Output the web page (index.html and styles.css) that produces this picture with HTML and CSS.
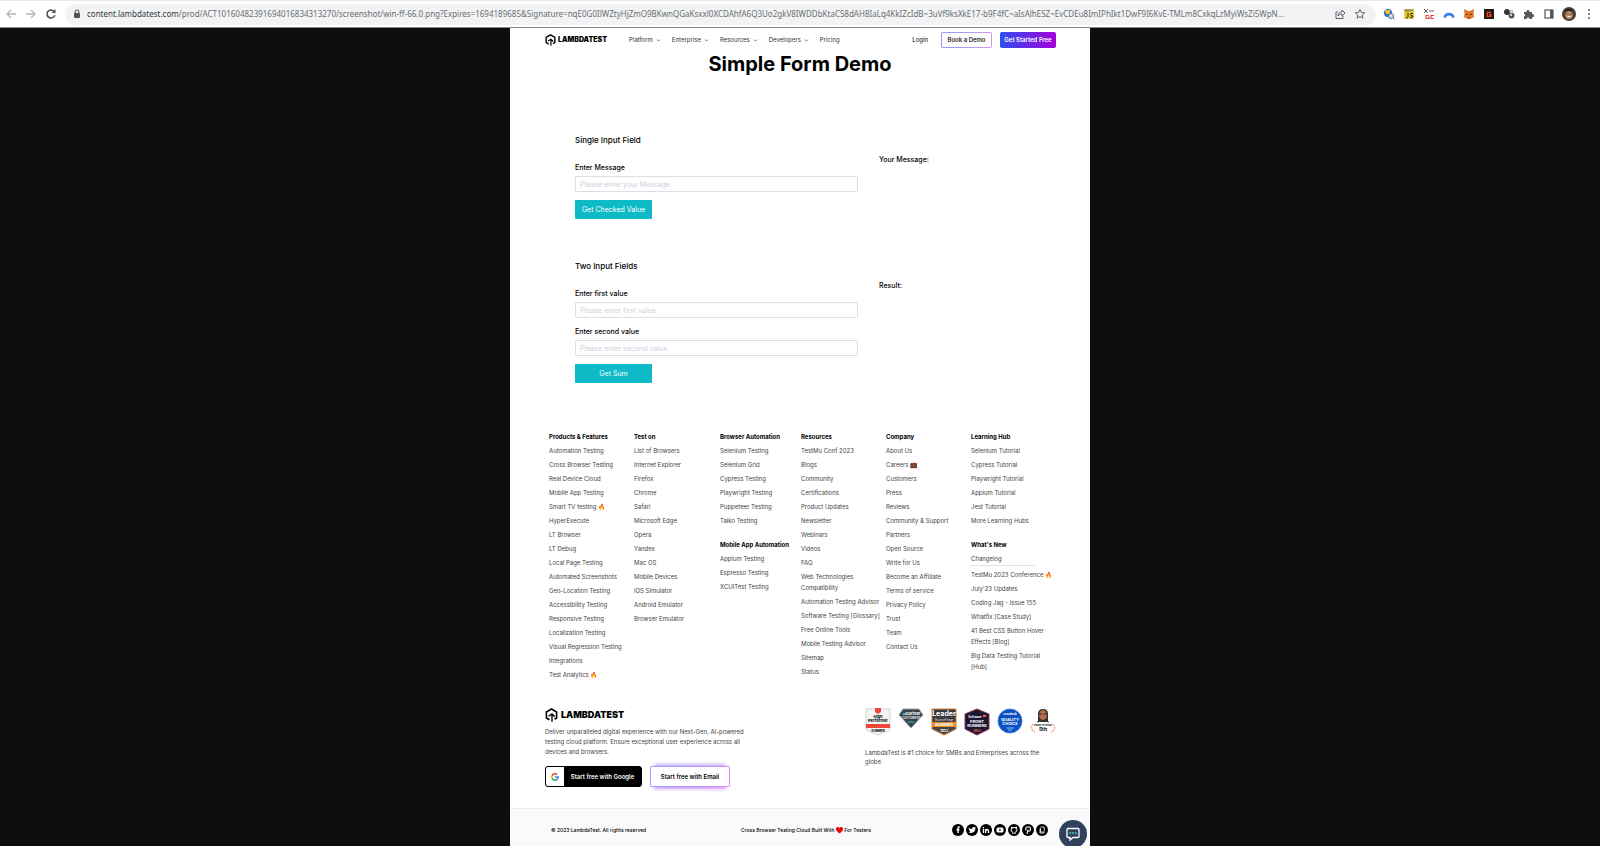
FILE: index.html
```html
<!DOCTYPE html>
<html lang="en">
<head>
    <meta charset="UTF-8">
    <meta name="viewport" content="width=device-width, initial-scale=1.0">
    <title>Simple Form Demo</title>
    <link rel="stylesheet" href="styles.css">
</head>
<body>

<!-- shared icons -->
<svg class="defs" width="0" height="0" aria-hidden="true">
    <symbol id="logo" viewBox="0 0 24 28">
        <path d="M8 23.500 1.800 20V8L12 2l10.200 6v12l-4 2.500" fill="none" stroke="#000" stroke-width="3.200"/>
        <path d="M6 16.500 13 12l5.500 5.500M13 12v15.500" fill="none" stroke="#000" stroke-width="2.800"/>
    </symbol>
    <symbol id="chevron" viewBox="0 0 8 8">
        <path d="M1.500 2.500 4 5l2.500-2.500" fill="none" stroke="#555" stroke-width="1.200"/>
    </symbol>
</svg>

<div class="toolbar">
    <button class="tool" aria-label="Back"><svg viewBox="0 0 12 12"><path d="M11 6H2M6 2 2 6l4 4" fill="none" stroke="#b5b7ba" stroke-width="1.300"/></svg></button>
    <button class="tool" aria-label="Forward"><svg viewBox="0 0 12 12"><path d="M1 6h9M6 2l4 4-4 4" fill="none" stroke="#b5b7ba" stroke-width="1.300"/></svg></button>
    <button class="tool" aria-label="Reload"><svg viewBox="0 0 12 12"><path d="M9.800 7.200A4 4 0 1 1 9 3.300" fill="none" stroke="#4c4f53" stroke-width="1.500"/><path d="M10.500 1v4h-4z" fill="#4c4f53"/></svg></button>
    <div class="address">
        <svg class="lock" viewBox="0 0 8 10"><path d="M2.200 4V2.800a1.800 1.800 0 0 1 3.600 0V4" fill="none" stroke="#505357" stroke-width="1.100"/><rect x="1" y="4" width="6" height="5" rx="1" fill="#505357"/></svg>
        <span class="url"><b>content.lambdatest.com</b>/prod/ACT10160482391694016834313270/screenshot/win-ff-66.0.png?Expires=1694189685&amp;Signature=nqE0G0IlWZtyHjZmO9BKwnQGaKsxxl0XCDAhfA6Q3Uo2gkV8IWDDbKtaCS8dAH8IaLq4KkIZcIdB~3uVf9ksXkE17-b9F4fC~aIsAlhESZ~EvCDEu8ImIPhIkt1DwF9I6KvE-TMLm8CxkqLzMyiWsZi5WpN...</span>
        <button class="tool share" aria-label="Share"><svg viewBox="0 0 12 12"><path d="M4 4H2v6.500h7V8M4 8c0-3 2-4 4-4V2l3 3-3 3V6C6.500 6 5 6.500 4 8z" fill="none" stroke="#5f6368"/></svg></button>
        <button class="tool" aria-label="Bookmark"><svg viewBox="0 0 12 12"><path d="m6 1.500 1.400 3 3.200.3-2.400 2.200.7 3.200L6 8.500l-2.900 1.700.7-3.200-2.400-2.200 3.200-.3z" fill="none" stroke="#5f6368"/></svg></button>
    </div>
    <div class="extensions">
        <svg viewBox="0 0 12 12"><circle cx="5" cy="5" r="4" fill="#2d6fd0"/><path d="M2 2h5v4H3z" fill="#f2bd2e"/><circle cx="8" cy="8" r="2.500" fill="#d9e2e8" stroke="#4b6b85"/><path d="m10 10 1.500 1.500" stroke="#4b6b85"/></svg>
        <svg viewBox="0 0 12 12"><rect x="1" y="1" width="10" height="10" fill="#e9cc32"/><path d="M2 3h5M2 2h8" stroke="#777" /><path d="M5 5v4q0 1-2 1M10 5.500q-2.500-1-2.500.7T10 8q0 2-3 1.200" fill="none" stroke="#222"/></svg>
        <svg viewBox="0 0 12 12"><path d="m1 1 4 4m0-4L1 5m5-2h5" stroke="#666" fill="none"/><path d="M6 7.500H3v3h3V9H5m6-1.500H8v3h3" stroke="#e34a43" fill="none" stroke-width="1.200"/></svg>
        <svg viewBox="0 0 12 12"><path d="M1.500 9.500a4.700 4.700 0 0 1 9 0" fill="none" stroke="#3b7ef0" stroke-width="2.600"/></svg>
        <svg viewBox="0 0 12 12"><path d="m1 1 4 2h2l4-2-.5 4.500L11 9l-2.500 1.500L6 11l-2.500-.5L1 9l.5-3.500z" fill="#e17726"/><path d="m3 6 2 .7M9 6l-2 .7M5 10h2" stroke="#59361d"/></svg>
        <svg viewBox="0 0 12 12"><rect x="1" y="1" width="10" height="10" fill="#231815"/><path d="M8 4.300H4.200v4h3.600V6.500H6" fill="none" stroke="#ee4928" stroke-width="1.300"/></svg>
        <svg viewBox="0 0 12 12"><circle cx="4" cy="4" r="3" fill="#333"/><circle cx="8.500" cy="7.500" r="3" fill="#555"/><circle cx="8.500" cy="3.500" r="2" fill="#ccc"/><circle cx="8" cy="7" r="1" fill="#eee"/></svg>
        <svg viewBox="0 0 12 12"><path d="M1 4h2.700a1.400 1.400 0 1 1 2.600 0H9v2.200a1.500 1.500 0 1 1 0 2.800v2H6.500a1.400 1.400 0 0 0-2.800 0H1V8.500a1.400 1.400 0 0 0 0-2.700z" fill="#54575b"/></svg>
        <svg viewBox="0 0 12 12"><rect x="2" y="2" width="8" height="8" fill="none" stroke="#54575b" stroke-width="1.200"/><path d="M7 2h3v8H7z" fill="#54575b"/></svg>
        <svg class="avatar" viewBox="0 0 14 14"><circle cx="7" cy="7" r="7" fill="#4a4038"/><ellipse cx="7" cy="7.500" rx="3.800" ry="4.500" fill="#c58b6b"/><path d="M3 6q0-4 4-4t4 4q-1-2-4-2T3 6" fill="#201a18"/><path d="M4 7h2.500M7.500 7H10" stroke="#332622" stroke-width=".6"/><path d="M5.500 9.500h3" stroke="#fff"/></svg>
        <svg viewBox="0 0 12 12"><g fill="#54575b"><circle cx="6" cy="2" r="1"/><circle cx="6" cy="6" r="1"/><circle cx="6" cy="10" r="1"/></g></svg>
    </div>
</div>

<div class="page">
    <header class="header">
        <a class="logo" href="#"><svg><use href="#logo"/></svg>LAMBDATEST</a>
        <nav class="nav">
            <a href="#">Platform <svg><use href="#chevron"/></svg></a>
            <a href="#">Enterprise <svg><use href="#chevron"/></svg></a>
            <a href="#">Resources <svg><use href="#chevron"/></svg></a>
            <a href="#">Developers <svg><use href="#chevron"/></svg></a>
            <a href="#">Pricing</a>
        </nav>
        <div class="account">
            <a href="#">Login</a>
            <button class="demo-btn">Book a Demo</button>
            <button class="start-btn">Get Started Free</button>
        </div>
    </header>

    <h1>Simple Form Demo</h1>

    <main>
        <section class="panel">
            <h2>Single Input Field</h2>
            <div class="panel-body">
                <form>
                    <label for="message">Enter Message</label>
                    <input type="text" id="message" placeholder="Please enter your Message">
                    <button type="button" class="submit-btn">Get Checked Value</button>
                </form>
                <div class="result">Your Message:</div>
            </div>
        </section>
        <section class="panel">
            <h2>Two Input Fields</h2>
            <div class="panel-body">
                <form>
                    <label for="sum1">Enter first value</label>
                    <input type="text" id="sum1" placeholder="Please enter first value">
                    <label for="sum2">Enter second value</label>
                    <input type="text" id="sum2" placeholder="Please enter second value">
                    <button type="button" class="submit-btn">Get Sum</button>
                </form>
                <div class="result">Result:</div>
            </div>
        </section>
    </main>

    <footer>
        <div class="links">
            <div>
                <h3>Products &amp; Features</h3>
                <ul>
                    <li><a href="#">Automation Testing</a></li>
                    <li><a href="#">Cross Browser Testing</a></li>
                    <li><a href="#">Real Device Cloud</a></li>
                    <li><a href="#">Mobile App Testing</a></li>
                    <li><a href="#">Smart TV testing 🔥</a></li>
                    <li><a href="#">HyperExecute</a></li>
                    <li><a href="#">LT Browser</a></li>
                    <li><a href="#">LT Debug</a></li>
                    <li><a href="#">Local Page Testing</a></li>
                    <li><a href="#">Automated Screenshots</a></li>
                    <li><a href="#">Geo-Location Testing</a></li>
                    <li><a href="#">Accessibility Testing</a></li>
                    <li><a href="#">Responsive Testing</a></li>
                    <li><a href="#">Localization Testing</a></li>
                    <li><a href="#">Visual Regression Testing</a></li>
                    <li><a href="#">Integrations</a></li>
                    <li><a href="#">Test Analytics 🔥</a></li>
                </ul>
            </div>
            <div>
                <h3>Test on</h3>
                <ul>
                    <li><a href="#">List of Browsers</a></li>
                    <li><a href="#">Internet Explorer</a></li>
                    <li><a href="#">Firefox</a></li>
                    <li><a href="#">Chrome</a></li>
                    <li><a href="#">Safari</a></li>
                    <li><a href="#">Microsoft Edge</a></li>
                    <li><a href="#">Opera</a></li>
                    <li><a href="#">Yandex</a></li>
                    <li><a href="#">Mac OS</a></li>
                    <li><a href="#">Mobile Devices</a></li>
                    <li><a href="#">iOS Simulator</a></li>
                    <li><a href="#">Android Emulator</a></li>
                    <li><a href="#">Browser Emulator</a></li>
                </ul>
            </div>
            <div>
                <h3>Browser Automation</h3>
                <ul>
                    <li><a href="#">Selenium Testing</a></li>
                    <li><a href="#">Selenium Grid</a></li>
                    <li><a href="#">Cypress Testing</a></li>
                    <li><a href="#">Playwright Testing</a></li>
                    <li><a href="#">Puppeteer Testing</a></li>
                    <li><a href="#">Taiko Testing</a></li>
                </ul>
                <h3>Mobile App Automation</h3>
                <ul>
                    <li><a href="#">Appium Testing</a></li>
                    <li><a href="#">Espresso Testing</a></li>
                    <li><a href="#">XCUITest Testing</a></li>
                </ul>
            </div>
            <div>
                <h3>Resources</h3>
                <ul>
                    <li><a href="#">TestMu Conf 2023</a></li>
                    <li><a href="#">Blogs</a></li>
                    <li><a href="#">Community</a></li>
                    <li><a href="#">Certifications</a></li>
                    <li><a href="#">Product Updates</a></li>
                    <li><a href="#">Newsletter</a></li>
                    <li><a href="#">Webinars</a></li>
                    <li><a href="#">Videos</a></li>
                    <li><a href="#">FAQ</a></li>
                    <li><a href="#">Web Technologies<br>Compatibility</a></li>
                    <li><a href="#">Automation Testing Advisor</a></li>
                    <li><a href="#">Software Testing [Glossary]</a></li>
                    <li><a href="#">Free Online Tools</a></li>
                    <li><a href="#">Mobile Testing Advisor</a></li>
                    <li><a href="#">Sitemap</a></li>
                    <li><a href="#">Status</a></li>
                </ul>
            </div>
            <div>
                <h3>Company</h3>
                <ul>
                    <li><a href="#">About Us</a></li>
                    <li><a href="#">Careers 💼</a></li>
                    <li><a href="#">Customers</a></li>
                    <li><a href="#">Press</a></li>
                    <li><a href="#">Reviews</a></li>
                    <li><a href="#">Community &amp; Support</a></li>
                    <li><a href="#">Partners</a></li>
                    <li><a href="#">Open Source</a></li>
                    <li><a href="#">Write for Us</a></li>
                    <li><a href="#">Become an Affiliate</a></li>
                    <li><a href="#">Terms of service</a></li>
                    <li><a href="#">Privacy Policy</a></li>
                    <li><a href="#">Trust</a></li>
                    <li><a href="#">Team</a></li>
                    <li><a href="#">Contact Us</a></li>
                </ul>
            </div>
            <div>
                <h3>Learning Hub</h3>
                <ul>
                    <li><a href="#">Selenium Tutorial</a></li>
                    <li><a href="#">Cypress Tutorial</a></li>
                    <li><a href="#">Playwright Tutorial</a></li>
                    <li><a href="#">Appium Tutorial</a></li>
                    <li><a href="#">Jest Tutorial</a></li>
                    <li><a href="#">More Learning Hubs</a></li>
                </ul>
                <h3>What's New</h3>
                <ul>
                    <li class="changelog"><a href="#">Changelog</a></li>
                    <li><a href="#">TestMu 2023 Conference 🔥</a></li>
                    <li><a href="#">July'23 Updates</a></li>
                    <li><a href="#">Coding Jag - Issue 155</a></li>
                    <li><a href="#">Whatfix [Case Study]</a></li>
                    <li><a href="#">41 Best CSS Button Hover<br>Effects [Blog]</a></li>
                    <li><a href="#">Big Data Testing Tutorial<br>[Hub]</a></li>
                </ul>
            </div>
        </div>

        <div class="about">
            <div class="pitch">
                <a class="logo logo-big" href="#"><svg><use href="#logo"/></svg>LAMBDATEST</a>
                <p>Deliver unparalleled digital experience with our Next-Gen, AI-powered testing cloud platform. Ensure exceptional user experience across all devices and browsers.</p>
                <div class="signup">
                    <button class="google-btn">
                        <span class="g"><svg viewBox="0 0 18 18"><path fill="#4285f4" d="M17.640 9.200c0-.64-.06-1.250-.16-1.840H9v3.480h4.840a4.140 4.140 0 0 1-1.800 2.720v2.260h2.920c1.700-1.570 2.680-3.880 2.680-6.620z"/><path fill="#34a853" d="M9 18c2.430 0 4.470-.8 5.960-2.180l-2.920-2.260c-.8.540-1.840.86-3.040.86-2.340 0-4.330-1.580-5.040-3.710H.96v2.330A9 9 0 0 0 9 18z"/><path fill="#fbbc05" d="M3.960 10.710a5.400 5.400 0 0 1 0-3.420V4.960H.96a9 9 0 0 0 0 8.080z"/><path fill="#ea4335" d="M9 3.580c1.320 0 2.500.45 3.440 1.350l2.580-2.590A9 9 0 0 0 .96 4.960l3 2.330C4.670 5.160 6.660 3.580 9 3.580z"/></svg></span>
                        <span class="g-text">Start free with Google</span>
                    </button>
                    <button class="email-btn">Start free with Email</button>
                </div>
            </div>
            <div class="awards">
                <div class="badges">
                    <svg viewBox="0 0 26 28"><path d="M1 1h24v21l-12 5-12-5z" fill="#f3f4f5" stroke="#cfd3d6"/><path d="M10 0h6v4l-3 2-3-2z" fill="#f0473a"/><path d="M1 16h24v4H1z" fill="#f0473a"/><text x="13" y="10">High</text><text x="13" y="14">Performer</text><text x="13" y="24" class="tiny">SUMMER</text></svg>
                    <svg viewBox="0 0 26 28"><path d="M5 1h16l4 6-12 13L1 7z" fill="#39434b" stroke="#99a0a5"/><path d="M5 5h3v2H5z" fill="#3ac6d3"/><text x="15" y="7" fill="#fff">Gartner</text><text x="13" y="11" fill="#ddd" class="tiny">CUSTOMERS</text><path d="M10 14h6" stroke="#3ac6d3"/></svg>
                    <svg viewBox="0 0 26 28"><path d="M1 1h24v20l-12 6-12-6z" fill="#f08a2c"/><path d="M1 1h24v13H1z" fill="#3a3a3c"/><path d="M1 19h24v2l-12 6-12-6z" fill="#4a4644"/><path d="M1 1h24v20l-12 6-12-6z" fill="none" stroke="#d8843a"/><text x="13" y="8" class="big" fill="#fff">Leader</text><text x="13" y="13" class="tiny" fill="#bbb">SourceForge</text><text x="13" y="18" fill="#fff">SUMMER</text><text x="13" y="24" class="tiny" fill="#fff">2023</text></svg>
                    <svg viewBox="0 0 26 28"><path d="m13 1 12 5v15l-12 6-12-6V6z" fill="#1c1533" stroke="#8c3a54"/><path d="M19 7h3v2h-3z" fill="#f26b38"/><text x="11" y="10" class="tiny" fill="#fff">Software</text><text x="13" y="15" fill="#fff">FRONT</text><text x="13" y="19" fill="#fff">RUNNERS</text><text x="13" y="24" class="tiny" fill="#f26b38">2023</text></svg>
                    <svg viewBox="0 0 26 28"><circle cx="13" cy="13" r="12" fill="#0b4fc0" stroke="#3b82e8"/><text x="13" y="7" class="tiny" fill="#fff">crozdesk</text><text x="13" y="13" fill="#fff">QUALITY</text><text x="13" y="17" fill="#fff">CHOICE</text><path d="M9 20h8m-6 2h4" stroke="#8fc0ff"/></svg>
                    <svg viewBox="0 0 26 28"><path d="M8 14V6q0-5 5-5t5 5v8z" fill="#34302e"/><ellipse cx="13" cy="7" rx="4" ry="5" fill="#b4684c"/><path d="M9 6h3m2 0h3" stroke="#222"/><path d="M7 14q6-3 12 0" stroke="#333" fill="none"/><text x="13" y="18" class="micro">Product of the day</text><text x="13" y="23" class="mid">5th</text><path d="M3 16q-4 5 2 8M23 16q4 5-2 8" fill="none" stroke="#f6a58f" stroke-width="1.500" stroke-dasharray="2 1"/></svg>
                </div>
                <p>LambdaTest is #1 choice for SMBs and Enterprises across the globe.</p>
            </div>
        </div>

        <div class="bottom">
            <span class="copyright">© 2023 LambdaTest. All rights reserved</span>
            <span class="built">Cross Browser Testing Cloud Built With <svg class="heart" viewBox="0 0 8 8"><path d="M4 7.500C1 5 0 4 0 2.500a2 2 0 0 1 4-.8 2 2 0 0 1 4 .8C8 4 7 5 4 7.500z" fill="#f00606"/></svg> For Testers</span>
            <div class="social">
                <a href="#" aria-label="Facebook"><svg viewBox="0 0 12 12"><path d="M7.800 3H7q-1 0-1 1v5M4.500 5.800h3" stroke="#fff" stroke-width="1.400" fill="none"/></svg></a>
                <a href="#" aria-label="Twitter"><svg viewBox="0 0 12 12"><path d="M2.500 3.500Q4 5 6 5q0-2 1.700-2 .8 0 1.300.6h1l-.7 1C9.300 7.500 7.500 9 5.200 9q-1.500 0-2.700-.8 1.200 0 2-.7-1.200-.4-1.400-1.300h.6q-1.200-.8-1.200-2.700z" fill="#fff"/></svg></a>
                <a href="#" aria-label="LinkedIn"><svg viewBox="0 0 12 12"><path d="M3.500 5v4M5.700 5v4m0-2q0-1.500 1.300-1.500T8.500 7v2M3.500 3v1.200" stroke="#fff" stroke-width="1.300" fill="none"/></svg></a>
                <a href="#" aria-label="YouTube"><svg viewBox="0 0 12 12"><rect x="2.500" y="3.500" width="7" height="5" rx="1.500" fill="#fff"/><path d="m5.300 4.800 2 1.200-2 1.200z" fill="#000"/></svg></a>
                <a href="#" aria-label="GitHub"><svg viewBox="0 0 12 12"><path d="M5 10V8.300Q3 7.800 3 5.800 3 3.500 6 3.500t3 2.300q0 2-2 2.500V10M3.500 5V3l1.300.8M8.500 5V3l-1.300.8" fill="none" stroke="#fff"/></svg></a>
                <a href="#" aria-label="Pinterest"><svg viewBox="0 0 12 12"><path d="m5 10 1-4.500M4 6.500Q3 3 6 2.800 9 3 8.500 5.500 7.500 8 5.700 7" fill="none" stroke="#fff" stroke-width="1.100"/></svg></a>
                <a href="#" aria-label="Glassdoor"><svg viewBox="0 0 12 12"><path d="M4.500 3h3.700v4.500M7.500 9H4V4.500h.5V8H8v1z" fill="none" stroke="#fff" stroke-width=".8"/></svg></a>
            </div>
        </div>
    </footer>

    <button class="chat" aria-label="Chat"><svg viewBox="0 0 16 16"><path d="M3 2.500h10q1 0 1 1v7q0 1-1 1H8L5 14v-2.500H3q-1 0-1-1v-7q0-1 1-1z" fill="none" stroke="#fff" stroke-width="1.300"/><path d="M4.500 7h1.600m1.100 0h1.600m1.100 0h1.600" stroke="#4bb5c5" stroke-width="2"/></svg></button>
</div>

</body>
</html>
```
FILE: styles.css
```css
* {
    box-sizing: border-box;
}
body {
    margin: 0;
    min-height: 100vh;
    display: flex;
    flex-direction: column;
    background: #0e0e0e;
    color: #000;
    font-family: Inter, "Liberation Sans", sans-serif;
    font-size: 6px;
    line-height: 10px;
}
h1, h2, h3, p, ul {
    margin: 0;
    padding: 0;
}
a {
    color: inherit;
    text-decoration: none;
}
button {
    padding: 0;
    border: none;
    background: none;
    font: inherit;
    cursor: pointer;
}
svg {
    display: block;
    flex: none;
}
.defs {
    position: absolute;
}

/* browser toolbar */
.toolbar {
    display: flex;
    align-items: center;
    height: 28px;
    padding: 0 5px;
    background: #fff;
    border-top: 1px solid #e8eaed;
    border-bottom: 1px solid #8b8b8b;
}
.tool {
    width: 20px;
}
.tool svg {
    width: 12px;
    height: 12px;
}
.address {
    flex: 1;
    min-width: 0;
    display: flex;
    align-items: center;
    height: 21px;
    padding: 0 2px 0 8px;
    border-radius: 11px;
    background: #f1f3f4;
}
.lock {
    width: 8px;
    height: 10px;
    margin-right: 6px;
}
.url {
    flex: 1;
    overflow: hidden;
    white-space: nowrap;
    font-family: "Noto Sans", sans-serif;
    font-size: 8px;
    line-height: 14px;
    color: #6b6e72;
}
.url b {
    font-weight: 400;
    color: #34373b;
}
.extensions {
    display: flex;
    align-items: center;
    gap: 8px;
    margin-left: 7px;
}
.extensions svg {
    width: 12px;
    height: 12px;
}
.extensions .avatar {
    width: 14px;
    height: 14px;
    margin: 0 -1px;
}

/* page */
.page {
    position: relative;
    flex: 1;
    display: flex;
    flex-direction: column;
    width: 100%;
    max-width: 580px;
    margin: 0 auto;
    background: #fff;
}
.header {
    display: flex;
    align-items: center;
    height: 24px;
    padding: 0 34px 0 35px;
}
.logo {
    display: flex;
    align-items: center;
    gap: 2px;
    font-size: 7px;
    font-weight: 900;
}
.logo svg {
    width: 11px;
    height: 12px;
}
.nav {
    display: flex;
    gap: 11px;
    margin-left: 22px;
    color: #333;
}
.nav a {
    display: flex;
    align-items: center;
    gap: 3px;
}
.nav svg {
    width: 5px;
    height: 5px;
}
.account {
    display: flex;
    align-items: center;
    margin-left: auto;
}
.demo-btn, .start-btn {
    height: 16px;
    border-radius: 2px;
    font-weight: 500;
}
.demo-btn {
    width: 51px;
    margin: 0 8px 0 13px;
    border: 1px solid transparent;
    background: linear-gradient(#fff, #fff) padding-box, linear-gradient(90deg, #8e9cff, #dc96ec) border-box;
}
.start-btn {
    width: 56px;
    color: #fff;
    font-weight: 600;
    background: linear-gradient(90deg, #2c50f0, #a400dc);
}
h1 {
    font-size: 20px;
    line-height: 24px;
    font-weight: 700;
    text-align: center;
}
main {
    padding: 58px 65px 0;
}
h2 {
    font-size: 8px;
    line-height: 12px;
    font-weight: 500;
}
.panel {
    margin-bottom: 41px;
}
.panel-body {
    display: flex;
    gap: 21px;
    padding-top: 8px;
}
form {
    flex: 0 1 283px;
    padding-top: 8px;
}
label {
    display: block;
    font-size: 7px;
    line-height: 11px;
    font-weight: 500;
}
input {
    display: block;
    width: 100%;
    height: 16px;
    margin: 3px 0 8px;
    padding: 0 4px;
    border: 1px solid #dcdfe3;
    border-radius: 1px;
    font-family: inherit;
    font-size: 7px;
}
input::placeholder {
    color: #c9d2de;
}
.submit-btn {
    width: 77px;
    height: 19px;
    border-radius: 1px;
    background: #0ebac5;
    color: #fff;
    font-size: 7px;
}
.result {
    padding-top: 1px;
    font-size: 7px;
    font-weight: 500;
}

/* footer */
footer {
    flex: 1;
    display: flex;
    flex-direction: column;
}
.links {
    display: grid;
    grid-template-columns: 85fr 86fr 81fr 85fr 85fr 86fr;
    padding: 7px 33px 0 39px;
}
h3 {
    margin-bottom: 3px;
    font-size: 6px;
    line-height: 11px;
    font-weight: 700;
    white-space: nowrap;
}
.links ul {
    margin-bottom: 13px;
    list-style: none;
    color: #444;
}
.links li {
    margin-bottom: 3px;
    line-height: 11px;
    white-space: nowrap;
}
.links .changelog {
    width: 64px;
    padding-bottom: 1px;
    border-bottom: 1px solid #dfe0ea;
}
.about {
    display: flex;
    justify-content: space-between;
    padding: 15px 34px 21px 35px;
    color: #444;
}
.pitch {
    width: 204px;
}
.logo-big {
    gap: 3px;
    font-size: 9px;
    color: #000;
}
.logo-big svg {
    width: 13px;
    height: 14px;
}
.pitch p {
    margin: 5px 0 9px;
}
.signup {
    display: flex;
    gap: 8px;
    font-weight: 600;
}
.google-btn {
    display: flex;
    width: 97px;
    height: 21px;
    border: 1px solid #000;
    border-radius: 3px;
    background: #000;
    color: #fff;
}
.g {
    display: flex;
    align-items: center;
    height: 100%;
    padding: 0 5px;
    border-radius: 2px 0 0 2px;
    background: #fff;
}
.g svg {
    width: 8px;
    height: 8px;
}
.g-text {
    flex: 1;
    align-self: center;
}
.email-btn {
    width: 80px;
    height: 21px;
    border: 1px solid transparent;
    border-radius: 2px;
    background: linear-gradient(#fff, #fff) padding-box, linear-gradient(90deg, #8fa6ff, #dc8cf0) border-box;
    box-shadow: 0 5px 4px -4px #b56cf0, 0 -5px 4px -4px #a48cff;
}
.awards {
    width: 191px;
}
.badges {
    display: flex;
    justify-content: space-between;
    margin-bottom: 12px;
}
.badges svg {
    width: 26px;
    height: 28px;
}
.badges text {
    font-size: 4px;
    font-weight: 700;
    text-anchor: middle;
}
.badges .micro {
    font-size: 2px;
}
.badges .tiny {
    font-size: 3px;
}
.badges .mid {
    font-size: 5px;
}
.badges .big {
    font-size: 7px;
}
.awards p {
    line-height: 9px;
}
.bottom {
    flex: 1;
    display: flex;
    align-items: center;
    min-height: 38px;
    padding: 4px 42px 0 41px;
    border-top: 1px solid #eee;
    background: #fafafa;
    font-size: 5px;
    font-weight: 500;
}
.copyright {
    width: 190px;
}
.heart {
    display: inline-block;
    width: 7px;
    height: 7px;
    vertical-align: middle;
}
.social {
    display: flex;
    gap: 2px;
    margin-left: auto;
}
.social a {
    width: 12px;
    height: 12px;
    border-radius: 50%;
    background: #000;
}
.chat {
    position: absolute;
    right: 3px;
    bottom: -2px;
    width: 28px;
    height: 28px;
    border-radius: 50%;
    background: #2f415c;
}
.chat svg {
    width: 16px;
    height: 16px;
    margin: 0 auto;
}
```
